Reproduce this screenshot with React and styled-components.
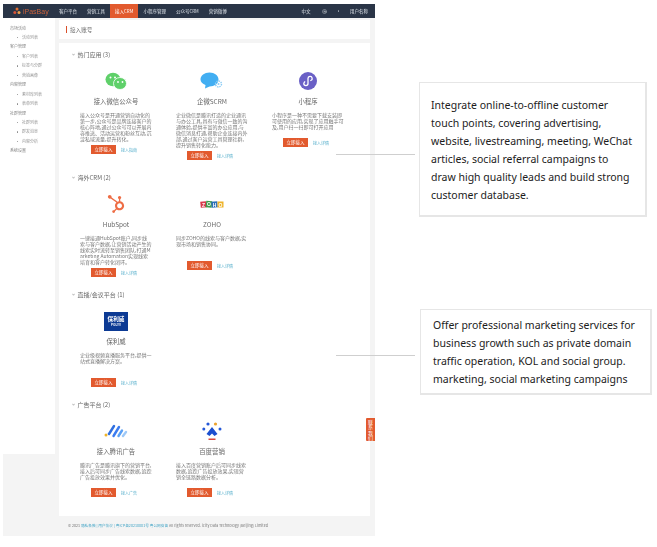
import React from 'react';
import styled, { createGlobalStyle } from 'styled-components';
import { FaHubspot } from 'react-icons/fa';
import { FiSettings } from 'react-icons/fi';

const CJK = '"Noto Sans CJK SC", "Noto Sans", sans-serif';

const Global = createGlobalStyle`
  html, body { margin: 0; padding: 0; background: #fff; }
  body { font-family: ${CJK}; }
`;

const Page = styled.div`
  position: relative;
  width: 657px;
  height: 547px;
  padding: 4px 0 0 3px;
  box-sizing: border-box;
  overflow: hidden;
`;
const Shell = styled.div`
  width: 372px;
  height: 532px;
  background: #f4f4f4;
  display: flex;
  flex-direction: column;
  filter: blur(0.3px);
`;
const TopBar = styled.header`
  height: 14px;
  flex: none;
  background: #2a3547;
  display: flex;
  align-items: stretch;
  color: #dfe4ea;
  font-size: 4.5px;
`;
const Logo = styled.div`
  width: 51px;
  flex: none;
  display: flex;
  align-items: center;
  gap: 2px;
  padding-left: 10px;
  box-sizing: border-box;
  color: #c9623c;
  font: 7px "Liberation Sans", sans-serif;
`;
const Tab = styled.div`
  padding: 0 5px;
  display: flex;
  align-items: center;
  background: ${p => (p.$active ? '#e25a2e' : 'transparent')};
  color: ${p => (p.$active ? '#fff' : '#dfe4ea')};
`;
const TopRight = styled.div`
  margin-left: auto;
  display: flex;
  align-items: center;
  gap: 11px;
  padding-right: 7px;
`;
const Dot = styled.span`
  width: 1.5px;
  height: 1.5px;
  border-radius: 50%;
  background: #99a2ae;
`;
const Body = styled.div`
  flex: 1;
  display: flex;
  align-items: flex-start;
  min-height: 0;
`;
const Sidebar = styled.aside`
  width: 52px;
  height: 436px;
  flex: none;
  background: #fff;
  padding: 5.5px 0 0 7px;
  box-sizing: border-box;
  font-size: 4px;
  color: #858585;
`;
const SideGroup = styled.div`
  height: 9.46px;
  line-height: 9.46px;
  white-space: nowrap;
`;
const SideItem = styled(SideGroup)`
  padding-left: 12px;
  position: relative;
  color: #969696;
  &::before {
    content: '';
    position: absolute;
    left: 7px;
    top: 4px;
    width: 1.4px;
    height: 1.4px;
    border-radius: 50%;
    background: #888;
  }
`;
const Main = styled.main`
  flex: 1;
  min-width: 0;
  padding: 2px 5px 0 4px;
`;
const TitleBar = styled.div`
  height: 19px;
  background: #fff;
  display: flex;
  align-items: center;
  padding-left: 7px;
  font-size: 5.6px;
  color: #666;
  &::before {
    content: '';
    width: 1px;
    height: 7px;
    background: #d9502b;
    margin-right: 3px;
  }
`;
const Card = styled.div`
  margin-top: 4px;
  height: 473px;
  background: #fff;
  padding: 6px 0 0 9px;
  box-sizing: border-box;
`;
const Section = styled.section`
  margin-bottom: 12px;
`;
const Heading = styled.h3`
  margin: 0;
  height: 10px;
  padding-left: 4px;
  display: flex;
  align-items: center;
  gap: 2.5px;
  font-size: 6px;
  font-weight: 400;
  color: #666;
`;
const Grid = styled.div`
  display: grid;
  grid-template-columns: repeat(3, 96px);
`;
const Item = styled.div`
  padding: 11px 8px 0;
  display: flex;
  flex-direction: column;
  align-items: center;
`;
const IconBox = styled.div`
  height: 22px;
  display: flex;
  align-items: center;
  justify-content: center;
`;
const ItemTitle = styled.div`
  margin-top: 6px;
  height: 8px;
  line-height: 8px;
  font-size: 6.4px;
  color: #666;
  white-space: nowrap;
`;
const Desc = styled.p`
  margin: 6px 0 0;
  width: 72px;
  min-height: 23px;
  font-size: 5px;
  line-height: 6px;
  color: #777;
  word-break: break-all;
`;
const Actions = styled.div`
  margin-top: 3px;
  padding-right: 4px;
  display: flex;
  align-items: center;
  gap: 5px;
`;
const Btn = styled.div`
  width: 25px;
  height: 9px;
  background: #e25a2e;
  color: #fff;
  font-size: 4.5px;
  line-height: 9px;
  text-align: center;
`;
const LinkText = styled.span`
  width: 16px;
  color: #55aecb;
  font-size: 4px;
  white-space: nowrap;
`;
const Footer = styled.footer`
  padding: 7px 0 0 9px;
  font-size: 3.7px;
  line-height: 6px;
  color: #777;
  white-space: nowrap;
  span { color: #4aa8c8; }
`;
const FloatTab = styled.div`
  position: absolute;
  left: 366px;
  top: 418px;
  width: 9px;
  height: 23px;
  background: #e25a2e;
  border-radius: 1px 0 0 1px;
  color: #fff;
  font-size: 5px;
  line-height: 5.6px;
  text-align: center;
  padding-top: 0.5px;
  box-sizing: border-box;
`;
const Callout = styled.div`
  position: absolute;
  left: ${p => p.$x}px;
  top: ${p => p.$y}px;
  width: ${p => p.$w}px;
  height: ${p => p.$h}px;
  box-sizing: border-box;
  background: #fff;
  border: 1px solid #e6e6e6;
  border-right-width: 2px;
  border-bottom-width: 2px;
  padding: ${p => p.$pt}px 0 0 ${p => p.$pl}px;
  font: 10.5px/18px "Noto Sans", sans-serif;
  color: #1c1c1c;
  white-space: pre;
`;
const Leader = styled.div`
  position: absolute;
  left: 336px;
  top: ${p => p.$y}px;
  width: 79px;
  height: 1px;
  background: #cfcfcf;
`;

const WeChat = () => (
  <svg width="22" height="18" viewBox="0 0 22 18">
    <ellipse cx="8" cy="7.5" rx="7.5" ry="6.8" fill="#5fd06a" />
    <ellipse cx="15" cy="11.5" rx="6.5" ry="6" fill="#5fd06a" stroke="#fff" strokeWidth="0.8" />
    <circle cx="5.5" cy="5.5" r="1" fill="#fff" />
    <circle cx="10" cy="5.5" r="1" fill="#fff" />
    <circle cx="13" cy="10" r="0.9" fill="#fff" />
    <circle cx="17.5" cy="10" r="0.9" fill="#fff" />
  </svg>
);
const Scrm = () => (
  <svg width="24" height="18" viewBox="0 0 24 18">
    <path d="M9.5 0.5C14.5 0.5 18.5 3.5 18.5 7.5S14.5 14.5 9.5 14.5L5 16.5 5.5 13C2.500 12 0.500 10 0.500 7.500 0.500 3.500 4.500 0.500 9.500 0.500Z" fill="#42aef2" />
    <circle cx="18.500" cy="12" r="3" fill="none" stroke="#8cccf5" strokeWidth="1.400" strokeDasharray="1.500 0.800" />
    <circle cx="18.500" cy="12" r="1" fill="#8cccf5" />
  </svg>
);
const Mini = () => (
  <svg width="18" height="18" viewBox="0 0 18 18">
    <circle cx="9" cy="9" r="9" fill="#6a60c6" />
    <path d="M4.800 11.500a2.100 2.100 0 0 0 4.200 0V6.500a2.100 2.100 0 1 1 2.800 2" fill="none" stroke="#fff" strokeWidth="1.300" strokeLinecap="round" />
    <path d="M6.200 9.500A2.100 2.100 0 0 0 5 11" fill="none" stroke="#fff" strokeWidth="1.300" />
  </svg>
);
const Zoho = () => (
  <svg width="24" height="9" viewBox="0 0 24 9" fontFamily="Liberation Sans, sans-serif" fontSize="5" fontWeight="700" fill="#fff" textAnchor="middle">
    <rect x="0.500" y="1.500" width="6" height="6" fill="#d8384a" transform="rotate(-6 3.500 4.500)" />
    <rect x="6" y="1" width="6" height="6.500" fill="#3d9b4b" transform="rotate(6 9 4)" />
    <rect x="11.500" y="1.500" width="6" height="6" fill="#2b6fb8" transform="rotate(-5 14.500 4.500)" />
    <rect x="17.500" y="1.500" width="6" height="6" fill="#eeb32b" />
    <text x="3.500" y="6.500">Z</text>
    <text x="9" y="6">O</text>
    <text x="14.500" y="6.500">H</text>
    <text x="20.500" y="6.500">O</text>
  </svg>
);
const PolyvBox = styled.div`
  width: 24px;
  height: 19px;
  background: #0c3a94;
  color: #fff;
  display: flex;
  flex-direction: column;
  align-items: center;
  justify-content: center;
  font-weight: 700;
  font-size: 5.6px;
  line-height: 7px;
  small { font: 700 3px/4px "Liberation Sans", sans-serif; }
`;
const Tencent = () => (
  <svg width="24" height="14" viewBox="0 0 24 14" strokeLinecap="round" fill="none">
    <circle cx="2" cy="11" r="1.500" fill="#f0b429" />
    <path d="M5 10L10 2" stroke="#2f6fe0" strokeWidth="2.400" />
    <path d="M9.500 12L15 3" stroke="#3b7cf0" strokeWidth="2.400" />
    <path d="M14.500 12L18 6.500" stroke="#5aa0f5" strokeWidth="2.400" />
    <path d="M19 12L22 8" stroke="#9cc8f8" strokeWidth="2.400" />
  </svg>
);
const Baidu = () => (
  <svg width="20" height="19" viewBox="0 0 20 19">
    <circle cx="6" cy="2" r="1.600" fill="#2558d8" />
    <circle cx="13.500" cy="2" r="1.600" fill="#eda32c" />
    <circle cx="1.800" cy="7" r="1.500" fill="#2558d8" />
    <circle cx="18" cy="7" r="1.500" fill="#2558d8" />
    <path d="M10 5L15.500 12 12.500 14 10 11.500 7.500 14 4.500 12Z" fill="#1c4fcf" />
    <rect x="6.500" y="16.500" width="7" height="1.500" fill="#d9473a" />
  </svg>
);
const Chevron = () => (
  <svg width="3" height="3" viewBox="0 0 4 4">
    <path d="M0.500 1L2 3 3.500 1" fill="none" stroke="#777" strokeWidth="0.700" />
  </svg>
);
const LogoMark = () => (
  <svg width="8" height="8" viewBox="0 0 8 8">
    <circle cx="4" cy="2" r="1.500" fill="#e2702f" />
    <circle cx="1.800" cy="5.500" r="1.500" fill="#d8543a" />
    <circle cx="6" cy="5.500" r="1.500" fill="#eda04a" />
  </svg>
);

const sideRows = [
  ['g', '市场活动'], ['i', '活动列表'], ['g', '客户管理'], ['i', '客户列表'], ['i', '标签与分群'], ['i', '营销画像'],
  ['g', '内容管理'], ['i', '素材库列表'], ['i', '表单列表'], ['g', '社群管理'], ['i', '社群列表'], ['i', '群发消息'], ['i', '内容分析'], ['g', '系统设置'],
];
const tabs = ['客户平台', '营销工具', '接入CRM', '小程序管理', '公众号CRM', '营销微博'];

const sections = [
  { title: '热门应用 (3)', items: [
    { icon: <WeChat />, title: '接入微信公众号', link: '接入指南', text: '接入公众号是开通营销自动化的第一步,公众号是品牌连接客户的核心阵地,通过公众号可以开展内容推送、活动运营和粉丝互动,沉淀私域流量,提升转化。' },
    { icon: <Scrm />, title: '企微SCRM', link: '接入详情', text: '企业微信是腾讯打造的企业通讯与办公工具,具有与微信一致的沟通体验,提供丰富的办公应用,与微信消息打通,帮助企业连接内外部,通过客户运营工具管理社群,提升销售转化能力。' },
    { icon: <Mini />, title: '小程序', link: '接入详情', text: '小程序是一种不需要下载安装即可使用的应用,实现了应用触手可及,用户扫一扫即可打开应用' },
  ]},
  { title: '海外CRM (2)', items: [
    { icon: <FaHubspot size={18} color="#ee6d45" />, title: 'HubSpot', link: '接入详情', text: '一键接通HubSpot账户,同步线索与客户数据,让营销活动产生的线索实时流转至销售团队,打通Marketing Automation实现线索培育和客户转化闭环。' },
    { icon: <Zoho />, title: 'ZOHO', link: '接入详情', text: '同步ZOHO的线索与客户数据,实现市场和销售协同。' },
  ]},
  { title: '直播/会议平台 (1)', items: [
    { icon: <PolyvBox>保利威<small>POLYV</small></PolyvBox>, title: '保利威', link: '接入详情', text: '企业级视频直播服务平台,提供一站式直播解决方案。' },
  ]},
  { title: '广告平台 (2)', items: [
    { icon: <Tencent />, title: '接入腾讯广告', link: '接入广告', text: '腾讯广告是腾讯旗下的营销平台,接入后可同步广告线索数据,追踪广告投放效果并优化。' },
    { icon: <Baidu />, title: '百度营销', link: '接入详情', text: '接入百度营销账户后可同步线索数据,追踪广告投放效果,实现营销全链路数据分析。' },
  ]},
];

export default function App() {
  return (
    <Page>
      <Global />
      <Shell>
        <TopBar>
          <Logo><LogoMark />iPasBay</Logo>
          {tabs.map((t, i) => <Tab key={t} $active={i === 2}>{t}</Tab>)}
          <TopRight>
            <span>中文</span>
            <FiSettings size={5} />
            <Dot />
            <span>用户名称</span>
          </TopRight>
        </TopBar>
        <Body>
          <Sidebar>
            {sideRows.map(([k, t]) => (k === 'g'
              ? <SideGroup key={t}>{t}</SideGroup>
              : <SideItem key={t}>{t}</SideItem>))}
          </Sidebar>
          <Main>
            <TitleBar>接入账号</TitleBar>
            <Card>
              {sections.map(s => (
                <Section key={s.title}>
                  <Heading><Chevron />{s.title}</Heading>
                  <Grid>
                    {s.items.map(it => (
                      <Item key={it.title}>
                        <IconBox>{it.icon}</IconBox>
                        <ItemTitle>{it.title}</ItemTitle>
                        <Desc>{it.text}</Desc>
                        <Actions>
                          <Btn>立即接入</Btn>
                          <LinkText>{it.link}</LinkText>
                        </Actions>
                      </Item>
                    ))}
                  </Grid>
                </Section>
              ))}
            </Card>
            <Footer>© 2021 <span>隐私条款 | 用户协议 | 粤ICP备20210001号 粤公网安备</span> All rights reserved. iCity Data Technology (Beijing) Limited</Footer>
          </Main>
        </Body>
      </Shell>
      <FloatTab>联系我们</FloatTab>
      <Leader $y={154} />
      <Leader $y={355} />
      <Callout $x={419} $y={82} $w={228} $h={135} $pt={13} $pl={11}>
        {'Integrate online-to-offline customer\ntouch points, covering advertising,\nwebsite, livestreaming, meeting, WeChat\narticles, social referral campaigns to\ndraw high quality leads and build strong\ncustomer database.'}
      </Callout>
      <Callout $x={420} $y={309} $w={232} $h={86} $pt={6} $pl={12}>
        {'Offer professional marketing services for\nbusiness growth such as private domain\ntraffic operation, KOL and social group.\nmarketing, social marketing campaigns'}
      </Callout>
    </Page>
  );
}
